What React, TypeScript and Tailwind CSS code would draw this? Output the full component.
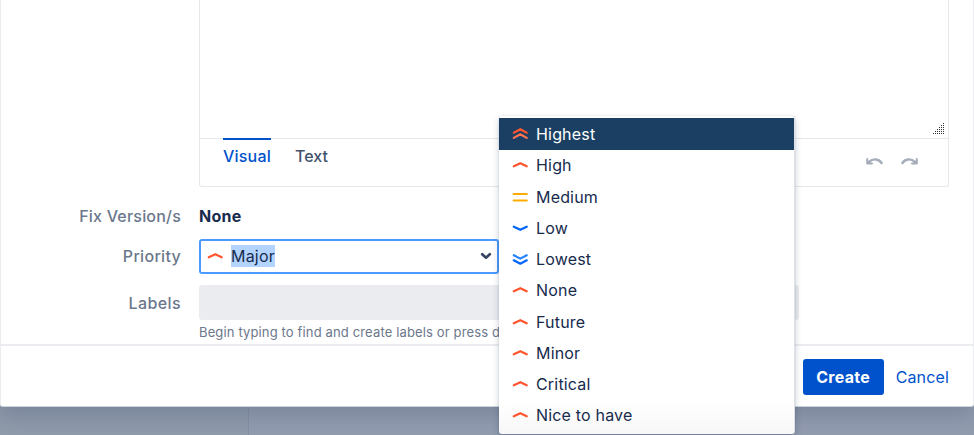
import React from 'react';

type Kind = 'highest' | 'up' | 'medium' | 'low' | 'lowest';

function PriorityIcon({ kind }: { kind: Kind }) {
  return (
    <svg width="16" height="16" viewBox="0 0 16 16" fill="none" strokeWidth="2.2" strokeLinecap="round" strokeLinejoin="round" className="shrink-0">
      {kind === 'highest' && (
        <>
          <path d="M1.8 6.7 8.3 3.2l6.4 3.5" stroke="#ff5630" />
          <path d="M1.8 11.9 8.3 8.3l6.4 3.6" stroke="#ff7452" />
        </>
      )}
      {kind === 'up' && <path d="M1.8 9.3 8.3 6.2l6.4 3.1" stroke="#ff5630" />}
      {kind === 'medium' && <path d="M1.6 5h13.2M1.6 11.6h13.2" stroke="#ffab00" strokeWidth="2" />}
      {kind === 'low' && <path d="M1.8 6.7 8.3 9.8l6.4-3.1" stroke="#0065ff" />}
      {kind === 'lowest' && (
        <>
          <path d="M1.8 4.2 8.3 7.6l6.4-3.4" stroke="#2684ff" />
          <path d="M1.8 9.3 8.3 12.7l6.4-3.4" stroke="#0065ff" />
        </>
      )}
    </svg>
  );
}

const options: { label: string; kind: Kind }[] = [
  { label: 'Highest', kind: 'highest' },
  { label: 'High', kind: 'up' },
  { label: 'Medium', kind: 'medium' },
  { label: 'Low', kind: 'low' },
  { label: 'Lowest', kind: 'lowest' },
  { label: 'None', kind: 'up' },
  { label: 'Future', kind: 'up' },
  { label: 'Minor', kind: 'up' },
  { label: 'Critical', kind: 'up' },
  { label: 'Nice to have', kind: 'up' },
];

function Menu() {
  return (
    <ul className="absolute left-[499px] top-[116px] z-20 h-[318px] w-[296px] overflow-hidden rounded-[3px] border-r border-[#dfe1e6] bg-linear-to-b from-white from-90% to-[#f7f7f7] pt-[2.4px] shadow-[0_0_1px_rgba(9,30,66,0.35),0_3px_7px_rgba(9,30,66,0.22)]">
      {options.map((o, i) => (
        <li
          key={o.label}
          className={`flex h-[31.25px] items-center gap-[8px] pl-[13px] text-[16px] tracking-[0.18px] ${i === 0 ? 'bg-[#1a3f62] text-white' : 'text-[#172b4d]'}`}
        >
          <PriorityIcon kind={o.kind} />
          {o.label}
        </li>
      ))}
    </ul>
  );
}

function Resizer() {
  const dots = [0, 1, 2, 3, 4, 5].flatMap((r) => Array.from({ length: r + 1 }, (_, c) => [10 - c * 2, r * 2]));
  return (
    <svg width="12" height="12" viewBox="0 0 12 12" shapeRendering="crispEdges" fill="#333">
      {dots.map(([x, y]) => (
        <rect key={`${x}-${y}`} x={x} y={y} width="1" height="1" />
      ))}
    </svg>
  );
}

function Undo({ flip = false }: { flip?: boolean }) {
  return (
    <svg width="18" height="10" viewBox="0 0 18 10" fill="none" stroke="#a5adba" className={flip ? '-scale-x-100' : ''}>
      <path d="M4.4 4.6C8 1.2 14 1.8 16.6 6" strokeWidth="2.4" strokeLinecap="round" />
      <path d="M2.2 2v4.6h4.8" strokeWidth="2" strokeLinecap="round" strokeLinejoin="round" />
      <path d="M2.2 2.4v4.2h4.4z" fill="#a5adba" stroke="none" />
    </svg>
  );
}

export default function App() {
  return (
    <div className="relative h-[435px] w-[974px] overflow-hidden bg-[#929caf] font-['Inter','Liberation_Sans',sans-serif]">
      <main className="relative z-10 flex h-[407px] w-[974px] flex-col rounded-b-[3px] border-x border-b border-[#ebecf0] border-b-[#cfd4dc] bg-white shadow-[0_8px_22px_rgba(9,30,66,0.18)]">
        <div className="flex h-[344px] flex-col pl-[198px]">
          <section className="h-[187px] w-[750px] rounded-b-[3px] border border-t-0 border-[#e6e7ea]">
            <div className="flex h-[138px] items-end justify-end pr-[3px] pb-[3px]">
              <Resizer />
            </div>
            <div className="flex h-[48px] border-t border-[#e6e7ea] pl-[23px] text-[16px]">
              <span className="-mt-[1px] h-[36px] w-[48px] border-t-2 border-[#0052cc] pt-[3px] text-center font-medium leading-[26px] tracking-[0.2px] whitespace-nowrap text-[#0052cc]">Visual</span>
              <span className="ml-[24px] pt-[4px] font-medium leading-[26px] text-[#42526e]">Text</span>
              <div className="mt-[18px] mr-[29px] ml-auto flex gap-[18px]">
                <Undo />
                <Undo flip />
              </div>
            </div>
          </section>
          <div className="-ml-[198px] flex h-[51px] items-center pt-[6px] text-[16px]">
            <span className="w-[180px] text-right font-medium tracking-[0.2px] text-[#6b778c]">Fix Version/s</span>
            <span className="ml-[18px] font-bold tracking-[0.3px] text-[#172b4d]">None</span>
          </div>
          <div className="-ml-[198px] flex h-[36px] items-center text-[16px]">
            <span className="w-[180px] text-right font-medium tracking-[0.3px] text-[#6b778c]">Priority</span>
            <div className="ml-[18px] flex h-[35px] w-[300px] items-center rounded-[3px] border-2 border-[#4c9aff] pl-[6px] pr-[5px]">
              <PriorityIcon kind="up" />
              <span className="ml-[8px] bg-[#b3d4ff] leading-[22px] tracking-[0.2px] text-[#172b4d]">Major</span>
              <svg width="12" height="8" viewBox="0 0 12 8" className="ml-auto" fill="none" stroke="#344563" strokeWidth="2.6" strokeLinecap="round" strokeLinejoin="round">
                <path d="M2.2 2.2 6 5.7l3.8-3.5" />
              </svg>
            </div>
          </div>
          <div className="-ml-[198px] mt-[11px] flex h-[35px] items-center text-[16px]">
            <span className="w-[180px] text-right font-medium tracking-[0.4px] text-[#6b778c]">Labels</span>
            <div className="ml-[18px] h-[35px] w-[600px] rounded-[3px] bg-[#ebecf0]" />
          </div>
          <p className="h-[24px] w-[300px] overflow-hidden text-[13px] leading-[24px] tracking-[0.14px] whitespace-nowrap text-[#6b778c]">Begin typing to find and create labels or press d</p>
        </div>
        <footer className="flex h-[62px] items-center justify-end border-t-2 border-[#ebecf0] pr-[24px] pt-px text-[16px]">
          <button className="h-[36px] w-[81px] rounded-[3px] bg-[#0052cc] font-bold tracking-[0.3px] text-white">Create</button>
          <button className="ml-[12px] tracking-[0.15px] text-[#0052cc]">Cancel</button>
        </footer>
      </main>
      <div className="flex h-[28px]">
        <div className="w-[249px] border-r border-[#8490a3] bg-[#8f9aab]" />
      </div>
      <Menu />
    </div>
  );
}
